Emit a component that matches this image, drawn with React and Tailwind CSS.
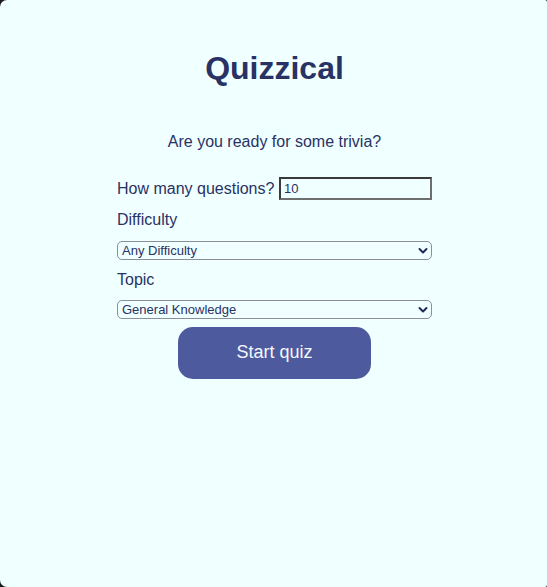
import React from "react";

function Chevron() {
  return (
    <svg
      className="pointer-events-none absolute right-[4px] top-1/2 -translate-y-1/2"
      width="10"
      height="8"
      viewBox="0 0 10 8"
    >
      <path d="M1.5 2 L5 5.5 L8.5 2" fill="none" stroke="#1e2a5a" strokeWidth="2" strokeLinecap="round" strokeLinejoin="round" />
    </svg>
  );
}

function Select({ value, options }) {
  return (
    <div className="relative w-full">
      <select
        defaultValue={value}
        className="block w-full h-[19px] appearance-none rounded-[5px] border border-[#8a8f99] bg-[#F0FFFF] pl-[4px] pr-[16px] text-[13px] leading-[17px] text-[#293264] outline-none"
        style={{ fontFamily: '"Liberation Sans", Arial, sans-serif' }}
      >
        {options.map((o) => (
          <option key={o}>{o}</option>
        ))}
      </select>
      <Chevron />
    </div>
  );
}

export default function App() {
  return (
    <div className="h-[587px] w-full bg-[#1a1a1a]" style={{ fontFamily: '"Liberation Sans", Arial, Helvetica, sans-serif' }}>
      <div className="h-full w-full bg-[#F0FFFF] rounded-l-[7px] rounded-r-[2px] pl-[2px] flex flex-col items-center text-[#293264]">
        <h1 className="mt-[50px] text-[32px] font-bold leading-[37px]">Quizzical</h1>
        <p className="mt-[46px] text-[16px] leading-[18px]">Are you ready for some trivia?</p>
        <div className="w-[315px] flex flex-col">
          <div className="mt-[26px] flex items-center justify-between">
            <label className="text-[16px] leading-[18px]">How many questions?</label>
            <input
              defaultValue="10"
              className="h-[23px] w-[153px] border-2 border-t-[#3a3a3a] border-l-[#3a3a3a] border-b-[#6e6e6e] border-r-[#6e6e6e] bg-[#F0FFFF] px-[3px] text-[13px] text-[#293264] outline-none"
              style={{ fontFamily: '"Liberation Sans", Arial, sans-serif' }}
            />
          </div>
          <label className="mt-[11px] text-[16px] leading-[18px]">Difficulty</label>
          <div className="mt-[12px]">
            <Select value="Any Difficulty" options={["Any Difficulty", "Easy", "Medium", "Hard"]} />
          </div>
          <label className="mt-[11px] text-[16px] leading-[18px]">Topic</label>
          <div className="mt-[11px]">
            <Select value="General Knowledge" options={["General Knowledge", "Books", "Film", "Music"]} />
          </div>
          <button className="mt-[8px] self-center h-[52px] w-[193px] rounded-[15px] bg-[#4D5B9E] pb-[2px] text-[18px] text-[#F5F7FB]">
            Start quiz
          </button>
        </div>
      </div>
    </div>
  );
}
